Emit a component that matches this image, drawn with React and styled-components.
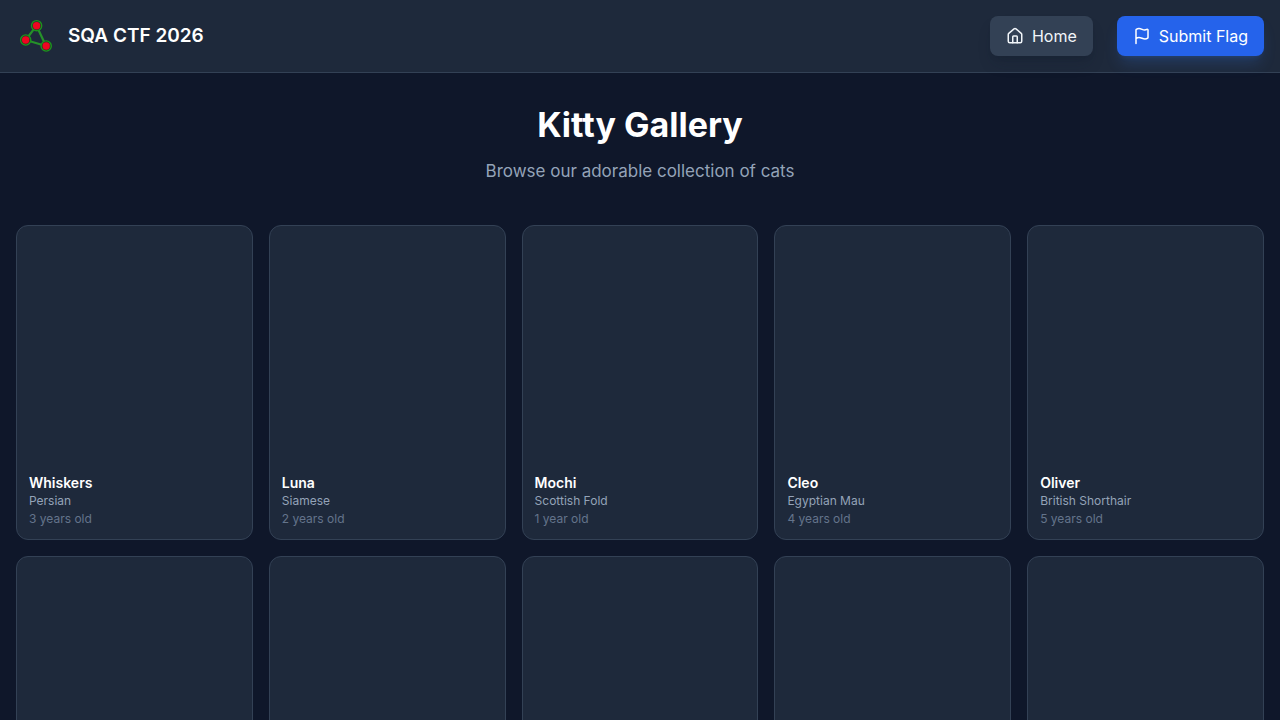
import React from "react";
import styled, { createGlobalStyle } from "styled-components";
import { Flag } from "lucide-react";

const GlobalStyle = createGlobalStyle`
  * {
    box-sizing: border-box;
  }
  body {
    margin: 0;
    background: #0f172a;
    color: #ffffff;
    font-family: Inter, "Liberation Sans", sans-serif;
    font-size: 16px;
    line-height: 24px;
  }
  h1, h2, p {
    margin: 0;
  }
`;

const Header = styled.header`
  display: flex;
  align-items: center;
  justify-content: space-between;
  padding: 16px;
  background: #1e293b;
  border-bottom: 1px solid #334155;
`;

const Brand = styled.a`
  display: flex;
  align-items: center;
  gap: 12px;
  color: #ffffff;
  font-size: 19px;
  font-weight: 600;
  line-height: 28px;
  text-decoration: none;
`;

const Nav = styled.nav`
  display: flex;
  align-items: center;
  gap: 24px;
`;

const NavLink = styled.a`
  display: flex;
  align-items: center;
  gap: 8px;
  padding: 8px 16px;
  border-radius: 8px;
  color: ${(props) => (props.$primary ? "#ffffff" : "#f1f5f9")};
  background: ${(props) => (props.$primary ? "#2563eb" : "#334155")};
  box-shadow: ${(props) =>
    props.$primary
      ? "0 10px 15px -3px rgba(59, 130, 246, 0.2), 0 4px 6px -4px rgba(59, 130, 246, 0.2)"
      : "0 10px 15px -3px rgba(15, 23, 42, 0.2), 0 4px 6px -4px rgba(15, 23, 42, 0.2)"};
  text-decoration: none;

  &:hover {
    background: ${(props) => (props.$primary ? "#3b82f6" : "#475569")};
  }
`;

const Main = styled.main`
  padding: 32px 16px;
`;

const Intro = styled.div`
  margin-bottom: 40px;
  text-align: center;
`;

const Title = styled.h1`
  font-size: 34px;
  font-weight: 700;
  line-height: 40px;
`;

const Subtitle = styled.p`
  margin-top: 12px;
  color: #94a3b8;
  font-size: 17px;
  line-height: 28px;
`;

const Gallery = styled.div`
  display: grid;
  grid-template-columns: repeat(5, minmax(0, 1fr));
  gap: 16px;

  @media screen and (max-width: 1023px) {
    grid-template-columns: repeat(3, minmax(0, 1fr));
  }
  @media screen and (max-width: 480px) {
    grid-template-columns: repeat(2, minmax(0, 1fr));
  }
`;

const Card = styled.article`
  overflow: hidden;
  background: #1e293b;
  border: 1px solid #334155;
  border-radius: 12px;
`;

const Photo = styled.div`
  aspect-ratio: 1;
`;

const Info = styled.div`
  padding: 12px;
`;

const Name = styled.h2`
  font-size: 14px;
  font-weight: 600;
  line-height: 20px;
`;

const Breed = styled.p`
  color: #94a3b8;
  font-size: 12px;
  line-height: 16px;
`;

const Age = styled(Breed)`
  margin-top: 2px;
  color: #64748b;
`;

const gatos = [
  { id: 1, name: "Whiskers", breed: "Persian", age: 3 },
  { id: 2, name: "Luna", breed: "Siamese", age: 2 },
  { id: 3, name: "Mochi", breed: "Scottish Fold", age: 1 },
  { id: 4, name: "Cleo", breed: "Egyptian Mau", age: 4 },
  { id: 5, name: "Oliver", breed: "British Shorthair", age: 5 },
];

// cards still waiting for their data
const loading = [6, 7, 8, 9, 10];

const Logo = () => (
  <svg width="40" height="40" viewBox="0 0 40 40" aria-hidden="true">
    <path
      d="M20.5 9.7 9.7 24 30 30Z"
      fill="none"
      stroke="#26912a"
      strokeWidth="2.2"
    />
    <g fill="#2a2a2c" stroke="#1c951c" strokeWidth="1.4">
      <circle cx="20.6" cy="9.7" r="5.1" />
      <circle cx="9.7" cy="24" r="5.1" />
      <circle cx="30.2" cy="30" r="5.1" />
    </g>
    <g fill="#ee0620">
      <circle cx="20.6" cy="9.7" r="3.7" />
      <circle cx="9.7" cy="24" r="3.7" />
      <circle cx="30.2" cy="30" r="3.7" />
    </g>
  </svg>
);

const HomeIcon = () => (
  <svg
    width="18"
    height="18"
    viewBox="0 0 24 24"
    fill="none"
    stroke="currentColor"
    strokeWidth="2"
    strokeLinecap="round"
    strokeLinejoin="round"
    aria-hidden="true"
  >
    <path d="M15 21v-8a1 1 0 0 0-1-1h-4a1 1 0 0 0-1 1v8" />
    <path d="M3 10a2 2 0 0 1 .709-1.528l7-5.999a2 2 0 0 1 2.582 0l7 5.999A2 2 0 0 1 21 10v9a2 2 0 0 1-2 2H5a2 2 0 0 1-2-2z" />
  </svg>
);

class App extends React.Component {
  ageText = (age) => {
    return age === 1 ? "1 year old" : `${age} years old`;
  };

  render() {
    return (
      <>
        <GlobalStyle />
        <Header>
          <Brand href="#">
            <Logo />
            SQA CTF 2026
          </Brand>
          <Nav>
            <NavLink href="#">
              <HomeIcon />
              Home
            </NavLink>
            <NavLink href="#submit" $primary>
              <Flag size={18} />
              Submit Flag
            </NavLink>
          </Nav>
        </Header>
        <Main>
          <Intro>
            <Title>Kitty Gallery</Title>
            <Subtitle>Browse our adorable collection of cats</Subtitle>
          </Intro>
          <Gallery>
            {gatos.map((gato) => (
              <Card key={gato.id}>
                <Photo />
                <Info>
                  <Name>{gato.name}</Name>
                  <Breed>{gato.breed}</Breed>
                  <Age>{this.ageText(gato.age)}</Age>
                </Info>
              </Card>
            ))}
            {loading.map((id) => (
              <Card key={id}>
                <Photo />
              </Card>
            ))}
          </Gallery>
        </Main>
      </>
    );
  }
}

export default App;
